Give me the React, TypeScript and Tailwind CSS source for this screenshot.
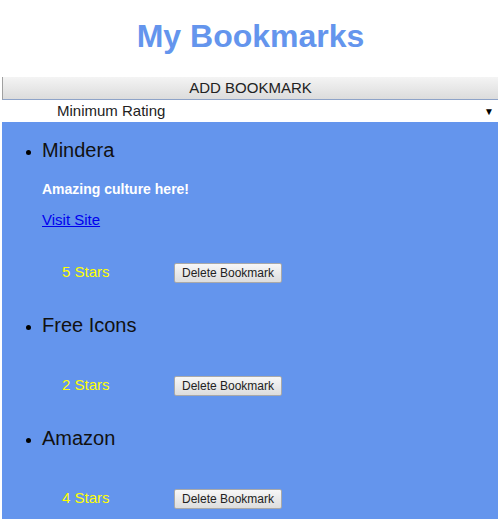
import React from 'react';

type Bookmark = {
  name: string;
  description?: string;
  url?: string;
  rating: number;
};

const bookmarks: Bookmark[] = [
  { name: 'Mindera', description: 'Amazing culture here!', url: '#', rating: 5 },
  { name: 'Free Icons', rating: 2 },
  { name: 'Amazon', rating: 4 },
];

function BookmarkItem({ bookmark, first }: { bookmark: Bookmark; first: boolean }) {
  return (
    <li className={`text-[16px] ${first ? '' : 'mt-[30px]'}`}>
      <div className="text-[20px] leading-[24px] text-[#111]">{bookmark.name}</div>
      {bookmark.description && (
        <div className="mt-[18px] text-[14px] leading-[18px] font-bold text-white">
          {bookmark.description}
        </div>
      )}
      {bookmark.url && (
        <div className="mt-[13px] text-[15px] leading-[18px]">
          <a href={bookmark.url} className="text-[#0000ee] underline">Visit Site</a>
        </div>
      )}
      <div className={`flex items-center pl-[20px] ${bookmark.url ? 'mt-[34px]' : 'mt-[39px]'}`}>
        <span className="w-[112px] mb-[2px] text-[15px] leading-[18px] text-[#ffff00]">{bookmark.rating} Stars</span>
        <button className="h-[20px] w-[108px] border border-[#a9a9a9] rounded-[2px] bg-gradient-to-b from-[#f7f7f7] to-[#dddddd] text-[12px] leading-[18px] text-[#222]">
          Delete Bookmark
        </button>
      </div>
    </li>
  );
}

export default function App() {
  return (
    <div className="min-h-[531px] bg-white pt-[18px] font-['Liberation_Sans',Arial,sans-serif]">
      <h1 className="text-center text-[32px] leading-[37px] font-bold text-[#6495ed]">My Bookmarks</h1>

      <div className="mx-[2px] mt-[22px] w-[496px]">
        <button className="block h-[23px] w-full border-l border-[#a0a0a0] border-b border-b-[#8ea3c8] bg-gradient-to-b from-[#f4f4f4] to-[#dcdcdc] text-[15px] leading-[22px] text-[#222]">
          ADD BOOKMARK
        </button>
        <div className="flex h-[22px] items-center justify-between bg-white pl-[55px] pr-[4px] text-[15px] text-[#222]">
          <span>Minimum Rating</span>
          <span className="text-[10px] text-black">▼</span>
        </div>

        <ul className="list-disc bg-[#6495ed] pl-10 pt-[16px] pb-[10px]">
          {bookmarks.map((b, i) => (
            <BookmarkItem key={b.name} bookmark={b} first={i === 0} />
          ))}
        </ul>
      </div>
    </div>
  );
}
